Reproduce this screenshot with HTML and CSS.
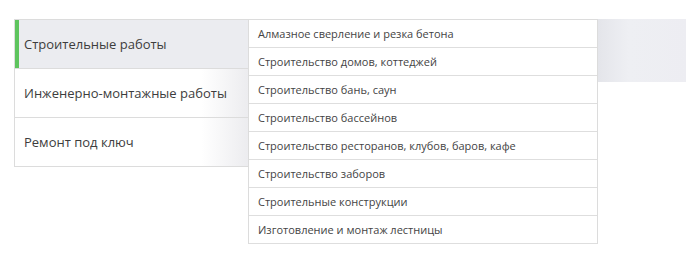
FILE: index.html
```html
<!DOCTYPE html>
<html lang="ru">
<head>
  <meta charset="UTF-8">
  <meta name="viewport" content="width=device-width, initial-scale=1.0">
  <title>Услуги</title>
  <link rel="stylesheet" href="styles.css">
</head>
<body>
  <div class="menu">
    <ul class="nav">
      <li class="nav-item active">Строительные работы</li>
      <li class="nav-item">Инженерно-монтажные работы</li>
      <li class="nav-item">Ремонт под ключ</li>
    </ul>
    <ul class="submenu">
      <li>Алмазное сверление и резка бетона</li>
      <li>Строительство домов, коттеджей</li>
      <li>Строительство бань, саун</li>
      <li>Строительство бассейнов</li>
      <li>Строительство ресторанов, клубов, баров, кафе</li>
      <li>Строительство заборов</li>
      <li>Строительные конструкции</li>
      <li>Изготовление и монтаж лестницы</li>
    </ul>
    <div class="panel"></div>
  </div>
</body>
</html>
```

FILE: styles.css
```css
* {
  box-sizing: border-box;
}
body {
  margin: 0;
  font-family: "Open Sans", Arial, sans-serif;
  background: #fff;
}
ul {
  list-style: none;
  margin: 0;
  padding: 0;
}
.menu {
  display: flex;
  align-items: flex-start;
  padding: 19px 0 0 14px;
}
.nav {
  width: 234px;
  border: 1px solid #dcdcdc;
  border-right: none;
  border-bottom: none;
}
.nav-item {
  height: 49px;
  display: flex;
  align-items: center;
  padding-left: 9px;
  font-size: 13px;
  color: #3d3d3d;
  border-bottom: 1px solid #dcdcdc;
  background: linear-gradient(to right, #fff 80%, #ececef 100%);
}
.nav-item.active {
  background: #ebecf0;
  box-shadow: inset 4px 0 #5ec45e;
}
.submenu {
  width: 350px;
  background: #fff;
  border: 1px solid #dcdcdc;
  border-bottom: none;
}
.submenu li {
  height: 28px;
  display: flex;
  align-items: center;
  padding-left: 9px;
  font-size: 11px;
  color: #444;
  border-bottom: 1px solid #dedede;
}
.panel {
  width: 88px;
  height: 63px;
  background: linear-gradient(to right, #e4e5ea 0, #eeeff3 35%, #ededf2 100%);
}
```
